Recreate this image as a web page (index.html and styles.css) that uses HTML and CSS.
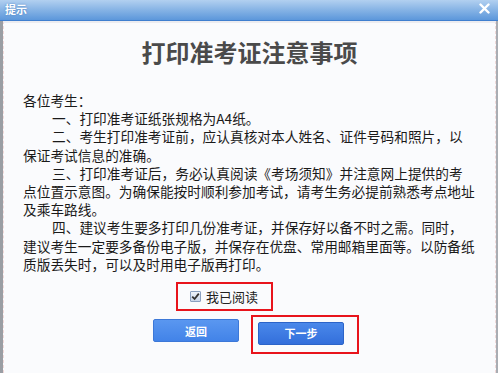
FILE: index.html
```html
<!DOCTYPE html>
<html lang="zh-CN">
<head>
<meta charset="utf-8">
<title>提示</title>
<link rel="stylesheet" href="styles.css">
</head>
<body>
<div class="dialog">
  <div class="titlebar">
    <span class="titlebar-text">提示</span>
    <svg class="close" width="11" height="11" viewBox="0 0 11 11"><path d="M1.5 1.5 L9.5 9.5 M9.5 1.5 L1.5 9.5" stroke="#fff" stroke-width="2.4" stroke-linecap="round"/></svg>
  </div>
  <div class="content">
    <h1 class="heading">打印准考证注意事项</h1>
    <div class="notice">
      <p class="lead">各位考生：</p>
      <p class="item">一、打印准考证纸张规格为A4纸。</p>
      <p class="item">二、考生打印准考证前，应认真核对本人姓名、证件号码和照片，以保证考试信息的准确。</p>
      <p class="item">三、打印准考证后，务必认真阅读《考场须知》并注意网上提供的考点位置示意图。为确保能按时顺利参加考试，请考生务必提前熟悉考点地址及乘车路线。</p>
      <p class="item">四、建议考生要多打印几份准考证，并保存好以备不时之需。同时，建议考生一定要多备份电子版，并保存在优盘、常用邮箱里面等。以防备纸质版丢失时，可以及时用电子版再打印。</p>
    </div>
    <div class="agree-row">
      <label class="agree">
        <span class="check"><svg width="9" height="9" viewBox="0 0 9 9"><path d="M1.2 4.6 L3.6 7 L7.8 1.6" fill="none" stroke="#333" stroke-width="1.8"/></svg></span>
        <span class="agree-text">我已阅读</span>
      </label>
    </div>
    <div class="buttons">
      <button class="btn">返回</button>
      <div class="next-wrap"><button class="btn btn-next">下一步</button></div>
    </div>
  </div>
</div>
</body>
</html>
```
FILE: styles.css
```css
* { box-sizing: border-box; }
html, body { margin: 0; padding: 0; }
body {
  width: 498px;
  height: 373px;
  overflow: hidden;
  background: #fafbfd;
  font-family: "Noto Sans CJK SC", "Noto Sans", sans-serif;
  color: #222;
}
.dialog {
  width: 498px;
  height: 373px;
  display: flex;
  flex-direction: column;
  border-left: 3px solid #9a9ea4;
  border-right: 2px solid #a9adb3;
}
.titlebar {
  height: 21px;
  flex: none;
  background: linear-gradient(#b2d0f0, #8ab6e6 45%, #5c97db);
  border-bottom: 1px solid #3f7fcf;
  display: flex;
  align-items: center;
  justify-content: space-between;
  padding: 0 8px 2px 5px;
  margin-left: -3px;
  margin-right: -2px;
}
.titlebar-text {
  color: #fff;
  font-size: 11px;
  font-weight: bold;
  line-height: 1;
  text-shadow: 0 0 2px #4a7fc0;
}
.close { display: block; margin-top: -1px; }
.content {
  flex: 1;
  border-top: 2px solid #ececf0;
  border-left: 1px dashed #f0d8d8;
  border-right: 1px dashed #f0d8d8;
  background: #fafbfd;
  padding: 14px 0 0 19px;
}
.heading {
  margin: 0;
  font-size: 24px;
  line-height: 30px;
  font-weight: bold;
  color: #4a4a4a;
  text-align: center;
  padding-right: 19px;
}
.notice {
  width: 453px;
  margin-top: 24px;
  font-size: 13.7px;
  line-height: 18.2px;
  color: #1a1a1a;
}
.notice p { margin: 0; }
.item { text-indent: 29px; }
.agree-row {
  display: flex;
  margin-top: 9px;
  padding-left: 153px;
}
.agree {
  display: flex;
  align-items: center;
  gap: 5px;
  height: 29px;
  padding: 0 13px 0 12px;
  border: 2px solid #e8141c;
}
.check {
  width: 11px;
  height: 11px;
  border: 1px solid #8aa0c0;
  background: linear-gradient(#eef3fa, #c9d6ea);
  display: flex;
  align-items: center;
  justify-content: center;
  border-radius: 1px;
}
.check svg { display: block; }
.agree-text { font-size: 13px; line-height: 1; color: #222; }
.buttons {
  display: flex;
  align-items: flex-start;
  margin-top: 4px;
  padding-left: 130px;
  gap: 14px;
}
.btn {
  width: 86px;
  height: 23px;
  border: 1px solid #3c78d8;
  border-radius: 2px;
  background: linear-gradient(#5a97f0, #4283e8);
  color: #fff;
  font-family: inherit;
  font-size: 11px;
  font-weight: bold;
  padding: 0;
  margin-top: 4px;
}
.next-wrap {
  border: 2px solid #e8141c;
  padding: 2px 13px 7px 5px;
  margin-left: -2px;
}
.btn-next {
  margin-top: 0;
  background: linear-gradient(#4a88ea, #336fdb);
  border-color: #2c64c8;
}
```
